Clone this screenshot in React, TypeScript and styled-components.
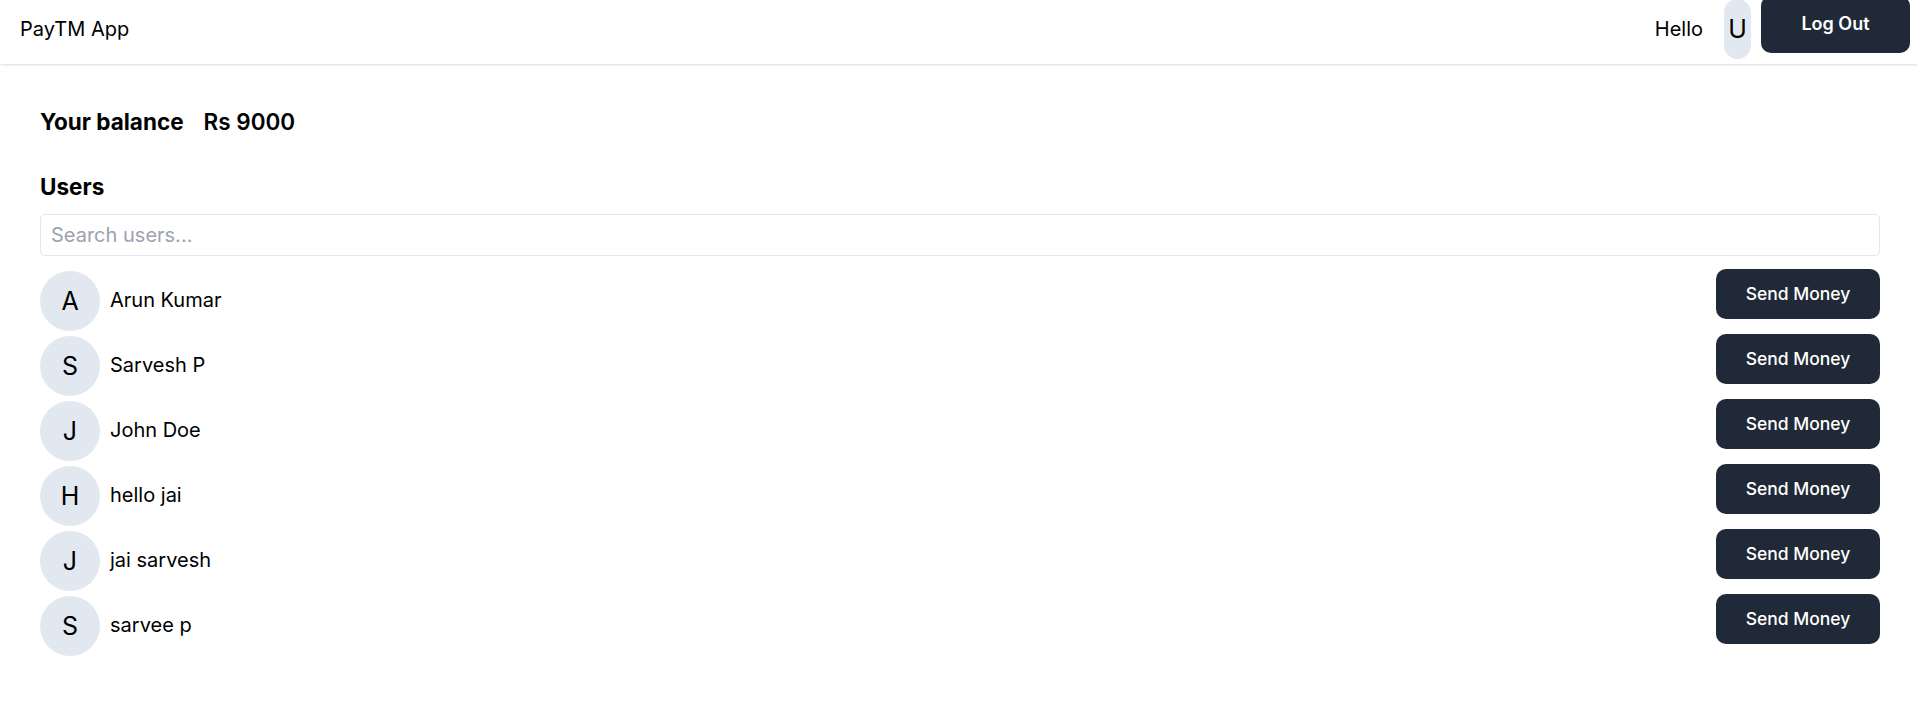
import React from "react";
import styled, { createGlobalStyle } from "styled-components";

const GlobalStyle = createGlobalStyle`
  * { box-sizing: border-box; }
  html, body { margin: 0; padding: 0; background: #ffffff; }
  body {
    font-family: Inter, "Noto Sans", "Liberation Sans", sans-serif;
    color: #000000;
    overflow: hidden;
  }
`;

const Header = styled.header`
  height: 64px;
  display: flex;
  justify-content: space-between;
  align-items: flex-start;
  box-shadow: 0 1px 3px 0 rgba(0, 0, 0, 0.1), 0 1px 2px -1px rgba(0, 0, 0, 0.1);
`;

const Brand = styled.div`
  margin-left: 20px;
  padding-top: 14px;
  font-size: 20px;
  line-height: 30px;
`;

const HeaderRight = styled.div`
  display: flex;
  align-items: flex-start;
`;

const Hello = styled.div`
  padding-top: 14px;
  font-size: 20px;
  line-height: 30px;
`;

const Pill = styled.div`
  width: 27px;
  height: 60px;
  margin-top: -1px;
  margin-left: 21px;
  border-radius: 9999px;
  background: #e2e8f0;
  display: flex;
  align-items: center;
  justify-content: center;
  font-size: 25px;
`;

const DarkButton = styled.button<{ $w: number; $h: number; $size: number; $weight: number }>`
  width: ${(p) => p.$w}px;
  height: ${(p) => p.$h}px;
  border: none;
  border-radius: 10px;
  background: #1f2937;
  color: #ffffff;
  font-family: Inter, "Noto Sans", "Liberation Sans", sans-serif;
  font-size: ${(p) => p.$size}px;
  font-weight: ${(p) => p.$weight};
  display: flex;
  align-items: center;
  justify-content: center;
  padding: 0 0 2px 0;
  cursor: pointer;
`;

const LogoutSlot = styled.div`
  margin-top: -4px;
  margin-left: 10px;
  margin-right: 8px;
`;

const Main = styled.main`
  padding: 40px 38px 40px 40px;
  display: flex;
  flex-direction: column;
`;

const BalanceRow = styled.div`
  display: flex;
  font-size: 22.5px;
  line-height: 35px;
`;

const BalanceLabel = styled.div`
  font-weight: 700;
`;

const BalanceValue = styled.div`
  font-weight: 600;
  margin-left: 20px;
`;

const SectionTitle = styled.div`
  margin-top: 30px;
  font-size: 22.5px;
  line-height: 35px;
  font-weight: 700;
`;

const Search = styled.input`
  margin: 10px 0;
  width: 100%;
  height: 42px;
  padding: 5px 10px;
  border: 1px solid #e2e8f0;
  border-radius: 5px;
  font-family: Inter, "Noto Sans", "Liberation Sans", sans-serif;
  font-size: 20px;
  line-height: 30px;
  color: #000;
  outline: none;
  &::placeholder { color: #9ca3af; }
`;

const List = styled.div`
  display: flex;
  flex-direction: column;
`;

const Row = styled.div`
  height: 65px;
  display: flex;
  justify-content: space-between;
  align-items: flex-start;
`;

const UserInfo = styled.div`
  display: flex;
  align-items: center;
  margin-top: 5px;
  height: 60px;
`;

const Avatar = styled.div`
  width: 60px;
  height: 60px;
  border-radius: 50%;
  background: #e2e8f0;
  display: flex;
  align-items: center;
  justify-content: center;
  font-size: 25px;
  margin-right: 10px;
`;

const Name = styled.div`
  font-size: 20px;
  line-height: 30px;
  padding-bottom: 2px;
`;

const ActionSlot = styled.div`
  margin-top: 3px;
`;

const users = ["Arun Kumar", "Sarvesh P", "John Doe", "hello jai", "jai sarvesh", "sarvee p"];

export default function App() {
  return (
    <>
      <GlobalStyle />
      <Header>
        <Brand>PayTM App</Brand>
        <HeaderRight>
          <Hello>Hello</Hello>
          <Pill>U</Pill>
          <LogoutSlot>
            <DarkButton $w={149} $h={57} $size={18} $weight={600}>Log Out</DarkButton>
          </LogoutSlot>
        </HeaderRight>
      </Header>
      <Main>
        <BalanceRow>
          <BalanceLabel>Your balance</BalanceLabel>
          <BalanceValue>Rs 9000</BalanceValue>
        </BalanceRow>
        <SectionTitle>Users</SectionTitle>
        <Search placeholder="Search users..." />
        <List>
          {users.map((u) => (
            <Row key={u}>
              <UserInfo>
                <Avatar>{u[0].toUpperCase()}</Avatar>
                <Name>{u}</Name>
              </UserInfo>
              <ActionSlot>
                <DarkButton $w={164} $h={50} $size={17.5} $weight={500}>Send Money</DarkButton>
              </ActionSlot>
            </Row>
          ))}
        </List>
      </Main>
    </>
  );
}
